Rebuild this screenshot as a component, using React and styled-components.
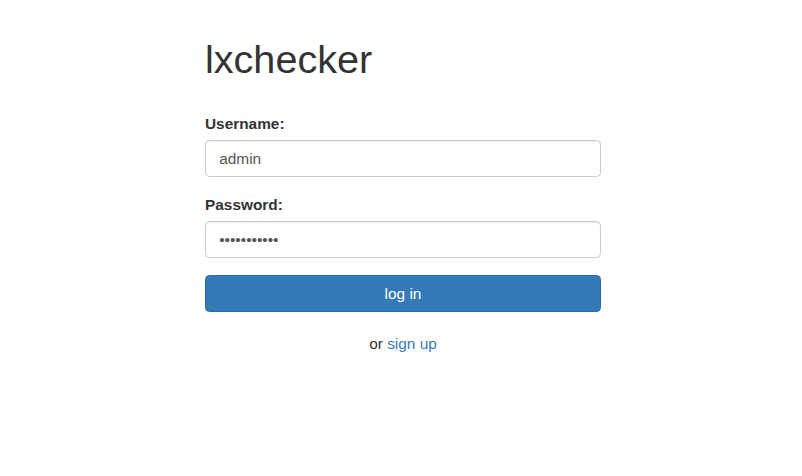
import React from "react";
import styled, { createGlobalStyle } from "styled-components";

const GlobalStyle = createGlobalStyle`
  html, body {
    margin: 0;
    padding: 0;
    background: #fff;
  }
  body {
    font-family: "Liberation Sans", Arial, Helvetica, sans-serif;
    font-size: 15.4px;
    line-height: 22px;
    color: #333;
  }
  * {
    box-sizing: border-box;
  }
`;

const Page = styled.div`
  display: flex;
  justify-content: center;
  padding: 0 0 0 4px;
`;

const Panel = styled.div`
  width: 396px;
  display: flex;
  flex-direction: column;
`;

const Title = styled.h1`
  font-size: 39.6px;
  font-weight: 500;
  line-height: 1.1;
  margin: 38px 0 31px;
  color: #333;
`;

const Form = styled.form`
  display: flex;
  flex-direction: column;
`;

const FormGroup = styled.div`
  display: flex;
  flex-direction: column;
  margin-bottom: ${(props) => (props.last ? "17px" : "16.5px")};
`;

const Label = styled.label`
  font-weight: bold;
  margin-bottom: 5.5px;
`;

const Input = styled.input`
  display: block;
  width: 100%;
  height: 37px;
  padding: 6.6px 13.2px;
  font-family: "Liberation Sans", Arial, sans-serif;
  font-size: 15.4px;
  color: #555;
  background: #fff;
  border: 1px solid #ccc;
  border-radius: 4.4px;
  box-shadow: inset 0 1px 1px rgba(0, 0, 0, 0.075);
  outline: none;
`;

const Button = styled.button`
  display: block;
  width: 100%;
  height: 37px;
  padding: 6.6px 13.2px;
  font-family: "Liberation Sans", Arial, sans-serif;
  font-size: 15.4px;
  color: #fff;
  background: #337ab7;
  border: 1px solid #2e6da4;
  border-radius: 4.4px;
  cursor: pointer;
`;

const Footer = styled.p`
  text-align: center;
  margin: 21px 0 0;
`;

const Link = styled.a`
  color: #337ab7;
  text-decoration: none;
`;

export default function App() {
  return (
    <>
      <GlobalStyle />
      <Page>
        <Panel>
          <Title>lxchecker</Title>
          <Form onSubmit={(e) => e.preventDefault()}>
            <FormGroup>
              <Label htmlFor="username">Username:</Label>
              <Input id="username" type="text" defaultValue="admin" />
            </FormGroup>
            <FormGroup last>
              <Label htmlFor="password">Password:</Label>
              <Input id="password" type="password" defaultValue="adminadmin1" />
            </FormGroup>
            <Button type="submit">log in</Button>
          </Form>
          <Footer>
            or <Link href="#">sign up</Link>
          </Footer>
        </Panel>
      </Page>
    </>
  );
}
